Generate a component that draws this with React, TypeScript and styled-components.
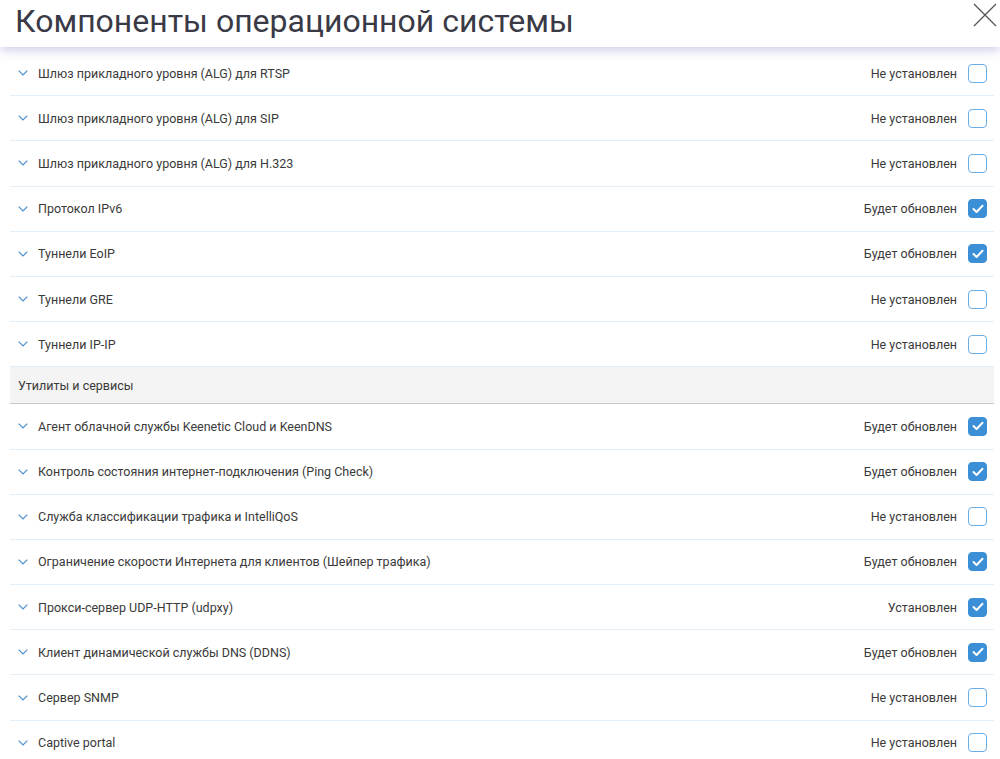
import React from "react";
import styled, { createGlobalStyle } from "styled-components";

const Global = createGlobalStyle`
  html, body { margin: 0; padding: 0; background: #fff; }
  body { font-family: Roboto, "Noto Sans", sans-serif; overflow: hidden; }
  * { box-sizing: border-box; }
`;

const Page = styled.div`
  width: 1000px;
  height: 759px;
  overflow: hidden;
  background: #fff;
  display: flex;
  flex-direction: column;
`;

const Header = styled.header`
  position: relative;
  z-index: 2;
  height: 47px;
  flex: none;
  display: flex;
  align-items: center;
  justify-content: space-between;
  padding: 0 3px 0 15px;
  background: #fff;
  box-shadow: 0 3px 10px rgba(110, 110, 190, 0.35);
`;

const Title = styled.h1`
  margin: 0;
  margin-top: -5px;
  font-family: Roboto, sans-serif;
  font-weight: 400;
  font-size: 32px;
  color: #3a3a46;
`;

const Close = styled.button`
  align-self: flex-start;
  margin-top: 3px;
  width: 24px;
  height: 24px;
  padding: 0;
  border: none;
  background: none;
  display: flex;
`;

const List = styled.div`
  padding: 4px 6px 0 10px;
  display: flex;
  flex-direction: column;
`;

const Row = styled.div`
  height: 45.2px;
  flex: none;
  display: flex;
  align-items: center;
  padding: 0 7px 0 8px;
  border-bottom: 1px solid #e2eff9;
  font-size: 12.5px;
  color: #3a3a3a;
`;

const Chevron = styled.svg`
  width: 10px;
  height: 6px;
  margin-right: 10px;
  flex: none;
`;

const Name = styled.span`
  flex: 1;
`;

const Status = styled.span`
  margin-right: 11px;
`;

const Box = styled.span<{ $checked: boolean }>`
  width: 19px;
  height: 19px;
  border-radius: 4px;
  flex: none;
  display: flex;
  align-items: center;
  justify-content: center;
  border: 1.5px solid ${(p) => (p.$checked ? "#3a8fd6" : "#6aaee6")};
  background: ${(p) => (p.$checked ? "#3a8fd6" : "#fff")};
`;

const Section = styled.div`
  height: 37px;
  flex: none;
  display: flex;
  align-items: center;
  padding: 0 8px;
  background: #f4f4f4;
  border-bottom: 1px solid #c8c8c8;
  font-size: 12.5px;
  color: #3a3a3a;
`;

type Item = { name: string; status: string; checked: boolean };

const group1: Item[] = [
  { name: "Шлюз прикладного уровня (ALG) для RTSP", status: "Не установлен", checked: false },
  { name: "Шлюз прикладного уровня (ALG) для SIP", status: "Не установлен", checked: false },
  { name: "Шлюз прикладного уровня (ALG) для H.323", status: "Не установлен", checked: false },
  { name: "Протокол IPv6", status: "Будет обновлен", checked: true },
  { name: "Туннели EoIP", status: "Будет обновлен", checked: true },
  { name: "Туннели GRE", status: "Не установлен", checked: false },
  { name: "Туннели IP-IP", status: "Не установлен", checked: false },
];

const group2: Item[] = [
  { name: "Агент облачной службы Keenetic Cloud и KeenDNS", status: "Будет обновлен", checked: true },
  { name: "Контроль состояния интернет-подключения (Ping Check)", status: "Будет обновлен", checked: true },
  { name: "Служба классификации трафика и IntelliQoS", status: "Не установлен", checked: false },
  { name: "Ограничение скорости Интернета для клиентов (Шейпер трафика)", status: "Будет обновлен", checked: true },
  { name: "Прокси-сервер UDP-HTTP (udpxy)", status: "Установлен", checked: true },
  { name: "Клиент динамической службы DNS (DDNS)", status: "Будет обновлен", checked: true },
  { name: "Сервер SNMP", status: "Не установлен", checked: false },
  { name: "Captive portal", status: "Не установлен", checked: false },
];

const ItemRow = ({ item }: { item: Item }) => (
  <Row>
    <Chevron viewBox="0 0 10 6">
      <path d="M0.7 0.7 L5 5 L9.3 0.7" fill="none" stroke="#4a8fd0" strokeWidth="1.2" />
    </Chevron>
    <Name>{item.name}</Name>
    <Status>{item.status}</Status>
    <Box $checked={item.checked}>
      {item.checked && (
        <svg width="12" height="10" viewBox="0 0 12 10">
          <path d="M1.5 5 L4.6 8 L10.5 1.8" fill="none" stroke="#fff" strokeWidth="2" strokeLinecap="round" strokeLinejoin="round" />
        </svg>
      )}
    </Box>
  </Row>
);

export default function App() {
  return (
    <Page>
      <Global />
      <Header>
        <Title>Компоненты операционной системы</Title>
        <Close aria-label="close">
          <svg width="24" height="24" viewBox="0 0 24 24">
            <path d="M1 1 L23 23 M23 1 L1 23" stroke="#555" strokeWidth="1.3" />
          </svg>
        </Close>
      </Header>
      <List>
        {group1.map((it) => (
          <ItemRow key={it.name} item={it} />
        ))}
        <Section>Утилиты и сервисы</Section>
        {group2.map((it) => (
          <ItemRow key={it.name} item={it} />
        ))}
      </List>
    </Page>
  );
}
